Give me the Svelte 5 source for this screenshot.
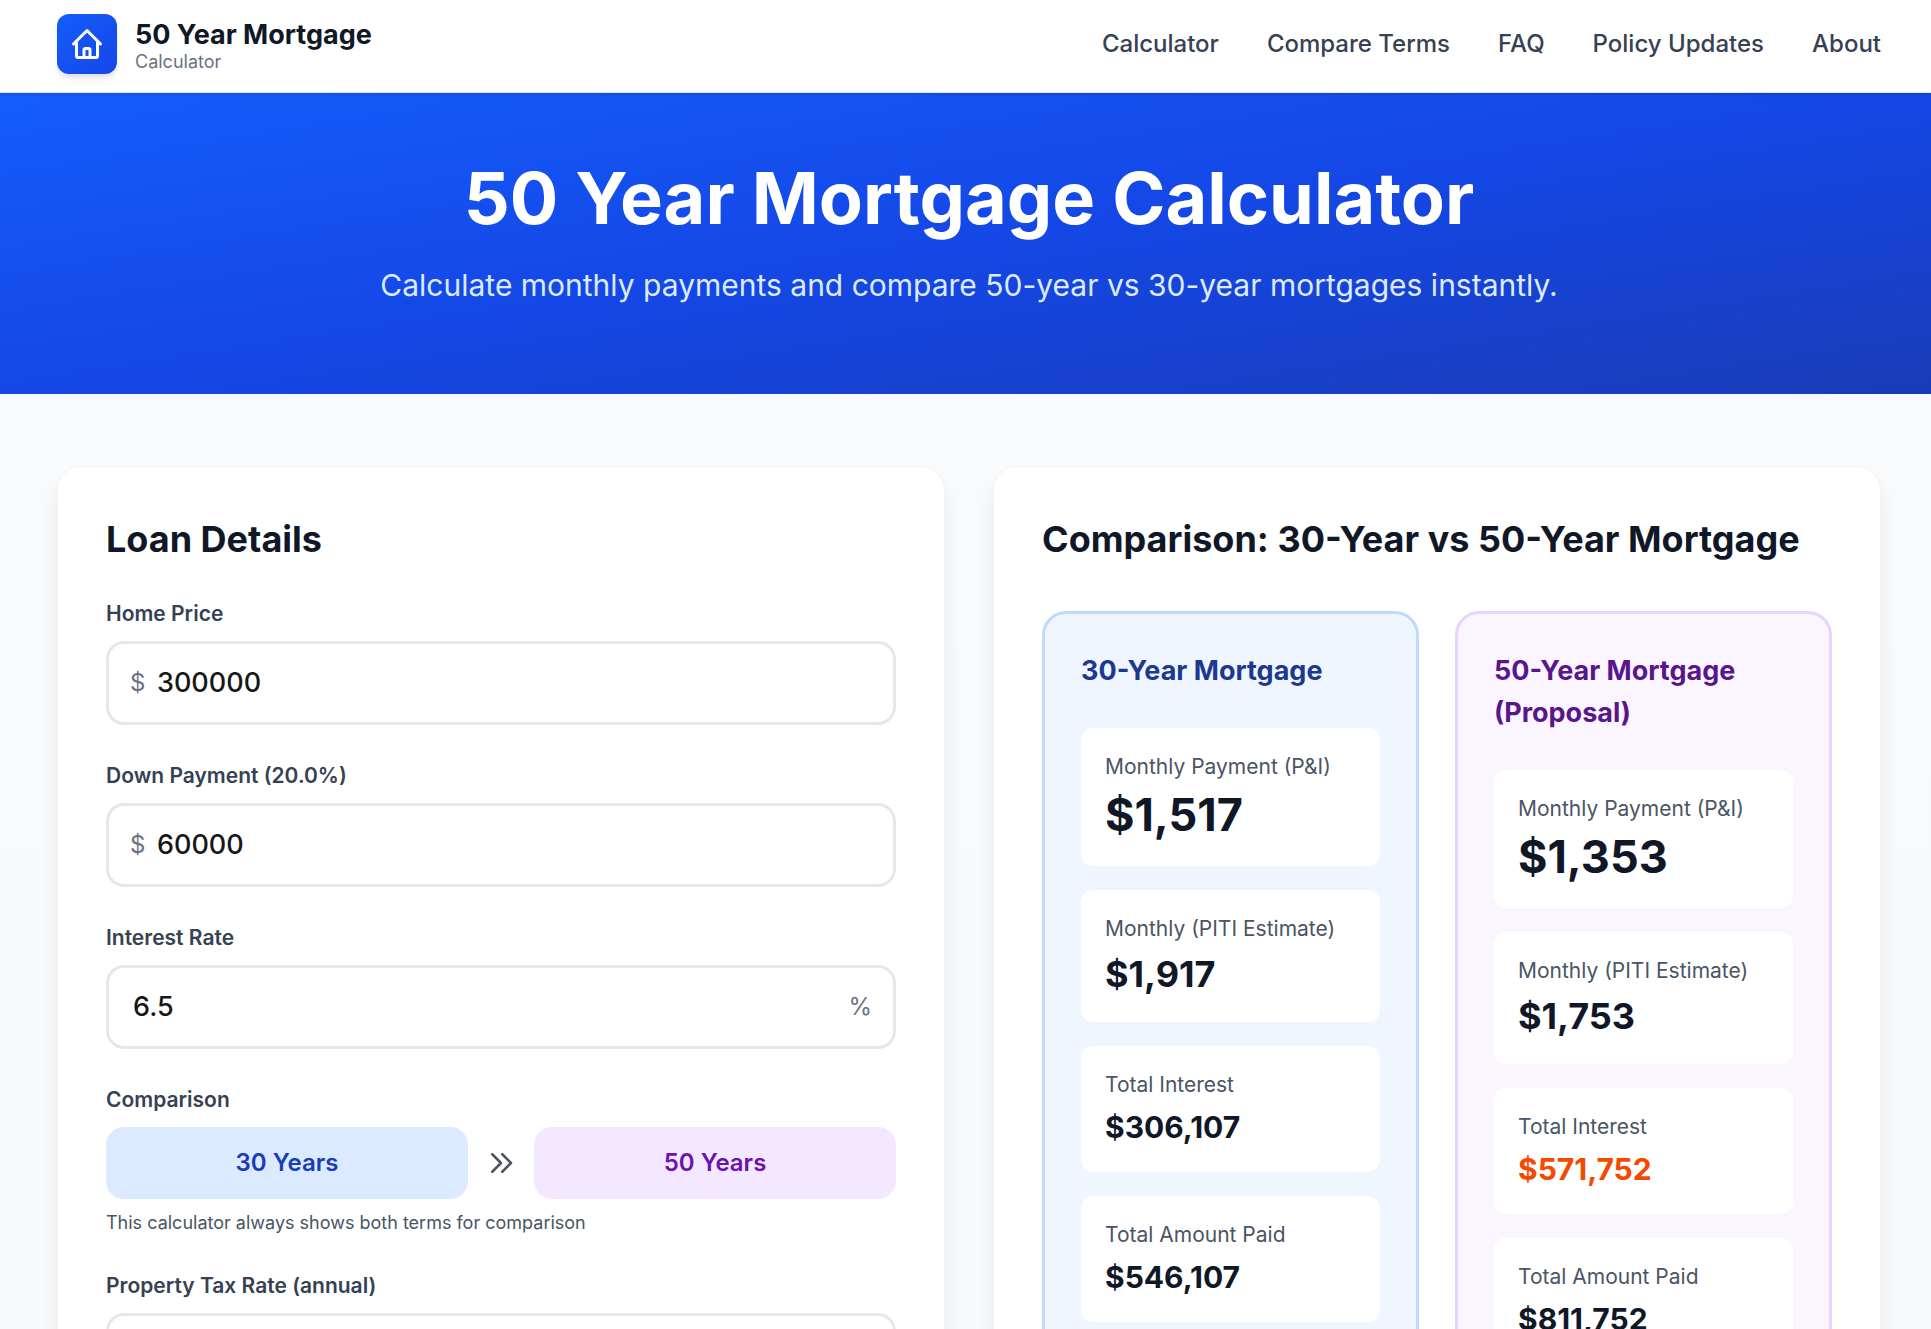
<script>
  const links = ['Calculator', 'Compare Terms', 'FAQ', 'Policy Updates', 'About'];

  let price = $state('300000');
  let down = $state('60000');
  let rate = $state('6.5');
  let tax = $state('');

  const plans = [
    {
      tone: 'blue',
      title: '30-Year Mortgage',
      metrics: [
        { label: 'Monthly Payment (P&I)', value: '$1,517', size: 'large' },
        { label: 'Monthly (PITI Estimate)', value: '$1,917', size: 'medium' },
        { label: 'Total Interest', value: '$306,107', size: 'small' },
        { label: 'Total Amount Paid', value: '$546,107', size: 'small' }
      ]
    },
    {
      tone: 'purple',
      title: '50-Year Mortgage (Proposal)',
      metrics: [
        { label: 'Monthly Payment (P&I)', value: '$1,353', size: 'large' },
        { label: 'Monthly (PITI Estimate)', value: '$1,753', size: 'medium' },
        { label: 'Total Interest', value: '$571,752', size: 'small', alert: true },
        { label: 'Total Amount Paid', value: '$811,752', size: 'small' }
      ]
    }
  ];
</script>

<div class="page">
  <header class="topbar">
    <a class="brand" href="#home">
      <span class="logo">
        <svg viewBox="0 0 24 24" fill="none" stroke="currentColor" stroke-width="2" stroke-linecap="round" stroke-linejoin="round" aria-hidden="true">
          <path d="M3 12l2-2m0 0l7-7 7 7M5 10v10a1 1 0 001 1h3m10-11l2 2m-2-2v10a1 1 0 01-1 1h-3m-6 0a1 1 0 001-1v-4a1 1 0 011-1h2a1 1 0 011 1v4a1 1 0 001 1m-6 0h6" />
        </svg>
      </span>
      <span class="brand-text">
        <span class="brand-name">50 Year Mortgage</span>
        <span class="brand-sub">Calculator</span>
      </span>
    </a>
    <nav class="nav">
      {#each links as link}
        <a href="#{link.toLowerCase().replace(' ', '-')}">{link}</a>
      {/each}
    </nav>
  </header>

  <section class="hero">
    <h1>50 Year Mortgage Calculator</h1>
    <p>Calculate monthly payments and compare 50-year vs 30-year mortgages instantly.</p>
  </section>

  <main class="content">
    <section class="card">
      <h2>Loan Details</h2>
      <form class="fields">
        <div class="field">
          <label for="price">Home Price</label>
          <div class="box">
            <span class="unit before">$</span>
            <input id="price" class="prefixed" type="text" inputmode="decimal" bind:value={price} />
          </div>
        </div>
        <div class="field">
          <label for="down">Down Payment (20.0%)</label>
          <div class="box">
            <span class="unit before">$</span>
            <input id="down" class="prefixed" type="text" inputmode="decimal" bind:value={down} />
          </div>
        </div>
        <div class="field">
          <label for="rate">Interest Rate</label>
          <div class="box">
            <input id="rate" type="text" inputmode="decimal" bind:value={rate} />
            <span class="unit after">%</span>
          </div>
        </div>
        <div class="field">
          <span class="caption">Comparison</span>
          <div class="terms">
            <div class="term blue">30 Years</div>
            <svg viewBox="0 0 24 24" fill="none" stroke="currentColor" stroke-width="2" stroke-linecap="round" stroke-linejoin="round" aria-hidden="true">
              <path d="M13 5l7 7-7 7M5 5l7 7-7 7" />
            </svg>
            <div class="term purple">50 Years</div>
          </div>
          <p class="hint">This calculator always shows both terms for comparison</p>
        </div>
        <div class="field">
          <label for="tax">Property Tax Rate (annual)</label>
          <div class="box">
            <input id="tax" type="text" inputmode="decimal" bind:value={tax} />
          </div>
        </div>
      </form>
    </section>

    <section class="card results">
      <h2>Comparison: 30-Year vs 50-Year Mortgage</h2>
      <div class="plans">
        {#each plans as plan}
          <article class="plan {plan.tone}">
            <h3>{plan.title}</h3>
            <div class="metrics">
              {#each plan.metrics as metric}
                <div class="metric">
                  <div class="metric-label">{metric.label}</div>
                  <div class="value {metric.size}" class:alert={metric.alert}>{metric.value}</div>
                </div>
              {/each}
            </div>
          </article>
        {/each}
      </div>
    </section>
  </main>
</div>

<style>
  :global(body) {
    margin: 0;
    background: #f9fafb;
  }

  .page {
    --gutter-left: 57px;
    --gutter-right: 50px;
    font-family: Inter, 'Liberation Sans', sans-serif;
    font-size: 24px;
    line-height: 36px;
    color: #101828;
    background: linear-gradient(to bottom, #f9fafc, #f8f9fb);
  }

  .page :global(*) {
    box-sizing: border-box;
  }

  h1,
  h2,
  h3,
  p {
    margin: 0;
  }

  .topbar {
    position: relative;
    z-index: 1;
    display: flex;
    align-items: center;
    justify-content: space-between;
    padding: 14px var(--gutter-right) 18px var(--gutter-left);
    background: #fff;
    border-bottom: 1px solid #e5e7eb;
    box-shadow: 0 1px 4px rgb(0 0 0 / 0.1), 0 1px 3px -1px rgb(0 0 0 / 0.1);
  }

  .brand {
    display: flex;
    align-items: center;
    gap: 18px;
    height: 60px;
    color: inherit;
    text-decoration: none;
  }

  .logo {
    display: grid;
    place-items: center;
    width: 60px;
    height: 60px;
    border-radius: 12px;
    color: #fff;
    background: linear-gradient(to bottom right, #155dfc, #1447e6);
    box-shadow: 0 6px 9px -2px rgb(0 0 0 / 0.1), 0 3px 6px -3px rgb(0 0 0 / 0.1);
  }

  .logo svg {
    width: 36px;
    height: 36px;
  }

  .brand-text {
    display: flex;
    flex-direction: column;
  }

  .brand-name {
    font-size: 27px;
    font-weight: 700;
    line-height: 42px;
  }

  .brand-sub {
    margin-top: -6px;
    font-size: 18px;
    line-height: 24px;
    color: #6a7282;
  }

  .nav {
    display: flex;
    gap: 48px;
  }

  .nav a {
    font-weight: 500;
    color: #364153;
    text-decoration: none;
  }

  .hero {
    display: flex;
    flex-direction: column;
    gap: 21px;
    padding: 60px var(--gutter-right) 88px var(--gutter-left);
    text-align: center;
    color: #fff;
    background: linear-gradient(to bottom right in oklab, #155dfc, #1447e6, #193cb8);
  }

  .hero h1 {
    font-size: 72px;
    font-weight: 700;
    line-height: 90px;
  }

  .hero p {
    font-size: 30px;
    line-height: 42px;
    color: #dbeafe;
  }

  .content {
    display: grid;
    grid-template-columns: repeat(2, minmax(0, 1fr));
    gap: 48px;
    padding: 72px var(--gutter-right) 72px var(--gutter-left);
  }

  .card {
    display: flex;
    flex-direction: column;
    gap: 36px;
    padding: 48px;
    background: #fff;
    border: 1px solid #f3f4f6;
    border-radius: 24px;
    box-shadow: 0 15px 23px -5px rgb(0 0 0 / 0.1), 0 6px 9px -6px rgb(0 0 0 / 0.1);
  }

  .results {
    gap: 48px;
  }

  .card h2 {
    font-size: 36px;
    font-weight: 700;
    line-height: 48px;
  }

  .fields {
    display: flex;
    flex-direction: column;
    gap: 36px;
  }

  .field {
    display: flex;
    flex-direction: column;
    gap: 12px;
  }

  label,
  .caption {
    font-size: 21px;
    font-weight: 600;
    line-height: 30px;
    color: #364153;
  }

  .box {
    position: relative;
  }

  input {
    display: block;
    width: 100%;
    height: 84px;
    padding: 0 24px 2px;
    font-family: inherit;
    font-size: 27px;
    font-weight: 500;
    color: #171717;
    background: #fff;
    border: 3px solid #e5e7eb;
    border-radius: 18px;
    outline: none;
  }

  input:focus {
    border-color: #155dfc;
  }

  .prefixed {
    padding-left: 48px;
  }

  .unit {
    position: absolute;
    top: 24px;
    color: #6a7282;
  }

  .before {
    left: 24px;
  }

  .after {
    right: 24px;
  }

  .terms {
    display: flex;
    align-items: center;
    gap: 18px;
  }

  .terms svg {
    flex: none;
    width: 30px;
    height: 30px;
    color: #4a5565;
  }

  .term {
    flex: 1;
    padding: 18px;
    font-weight: 600;
    text-align: center;
    border-radius: 18px;
  }

  .term.blue {
    color: #193cb8;
    background: #dbeafe;
  }

  .term.purple {
    color: #6e11b0;
    background: #f3e8ff;
  }

  .hint {
    font-size: 18px;
    line-height: 24px;
    color: #4a5565;
  }

  .plans {
    display: grid;
    flex: 1;
    grid-template-columns: repeat(2, minmax(0, 1fr));
    gap: 36px;
  }

  .plan {
    display: flex;
    flex-direction: column;
    gap: 36px;
    padding: 36px;
    border: 3px solid;
    border-radius: 24px;
  }

  .plan.blue {
    background: #eff6ff;
    border-color: #bedbff;
  }

  .plan.purple {
    background: #faf5ff;
    border-color: #e9d4ff;
  }

  .plan h3 {
    font-size: 27px;
    font-weight: 700;
    line-height: 42px;
  }

  .plan.blue h3 {
    color: #1c398e;
  }

  .plan.purple h3 {
    color: #59168b;
  }

  .metrics {
    display: flex;
    flex-direction: column;
    gap: 24px;
  }

  .metric {
    display: flex;
    flex-direction: column;
    gap: 6px;
    padding: 24px;
    background: #fff;
    border-radius: 12px;
  }

  .metric-label {
    font-size: 21px;
    line-height: 30px;
    color: #4a5565;
  }

  .value {
    font-weight: 700;
  }

  .large {
    font-size: 45px;
    line-height: 54px;
  }

  .medium {
    font-size: 36px;
    line-height: 48px;
  }

  .small {
    font-size: 30px;
    line-height: 42px;
  }

  .alert {
    color: #f54900;
  }
</style>
